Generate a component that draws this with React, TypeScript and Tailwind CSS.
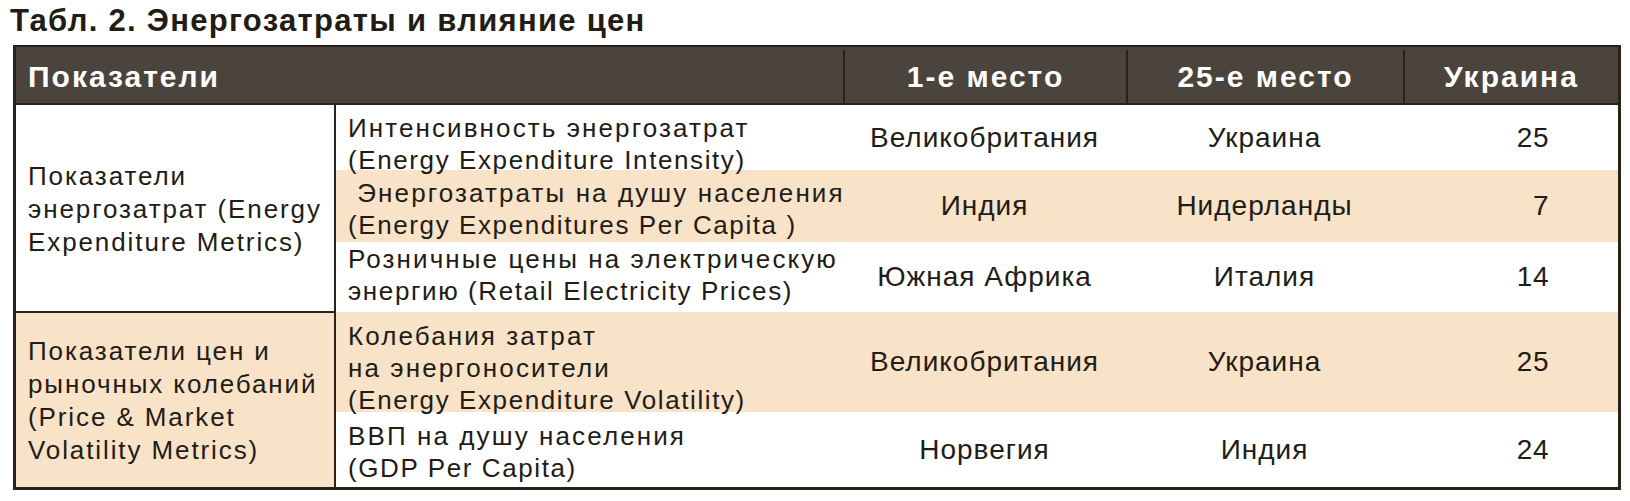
import React from "react";

type Row = {
  h: string;
  pad: string;
  tan: boolean;
  label: React.ReactNode;
  first: string;
  last: string;
  ua: string;
};

const Cy = ({ children }: { children: React.ReactNode }) => (
  <span className="tracking-[2.1px]">{children}</span>
);

const rows: Row[] = [
  {
    h: "h-[65px]",
    pad: "pt-[13px]",
    tan: false,
    label: (
      <>
        <Cy>Интенсивность энергозатрат</Cy>
        <br />
        (Energy Expenditure Intensity)
      </>
    ),
    first: "Великобритания",
    last: "Украина",
    ua: "25",
  },
  {
    h: "h-[72px]",
    pad: "pt-[5px]",
    tan: true,
    label: (
      <>
        <Cy>{"\u00a0"}Энергозатраты на душу населения</Cy>
        <br />
        (Energy Expenditures Per Capita )
      </>
    ),
    first: "Индия",
    last: "Нидерланды",
    ua: "7",
  },
  {
    h: "h-[70px]",
    pad: "pb-[5px]",
    tan: false,
    label: (
      <>
        <Cy>Розничные цены на электрическую</Cy>
        <br />
        энергию (Retail Electricity Prices)
      </>
    ),
    first: "Южная Африка",
    last: "Италия",
    ua: "14",
  },
  {
    h: "h-[100px]",
    pad: "pt-[12px]",
    tan: true,
    label: (
      <>
        <Cy>Колебания затрат</Cy>
        <br />
        <Cy>на энергоносители</Cy>
        <br />
        (Energy Expenditure Volatility)
      </>
    ),
    first: "Великобритания",
    last: "Украина",
    ua: "25",
  },
  {
    h: "h-[75px]",
    pad: "pt-[4px]",
    tan: false,
    label: (
      <>
        <Cy>ВВП на душу населения</Cy>
        <br />
        (GDP Per Capita)
      </>
    ),
    first: "Норвегия",
    last: "Индия",
    ua: "24",
  },
];

function DataRow({ r }: { r: Row }) {
  return (
    <div className={`flex ${r.h} ${r.tan ? "bg-[#f8e2c8]" : "bg-white"}`}>
      <div
        className={`w-[507px] flex items-center pl-[12px] ${r.pad} text-[26px] leading-[32px] tracking-[1.6px] whitespace-nowrap`}
      >
        <div className="relative z-10">{r.label}</div>
      </div>
      <div className="w-[283px] flex items-center justify-center text-[28px] tracking-[1px]">
        {r.first}
      </div>
      <div className="w-[277px] flex items-center justify-center text-[28px] tracking-[1px]">
        {r.last}
      </div>
      <div className="w-[215px] flex items-center justify-end pr-[69px] text-[28px] tracking-[0.5px]">
        {r.ua}
      </div>
    </div>
  );
}

export default function App() {
  return (
    <div
      className="w-[1630px] h-[501px] bg-white text-[#221c15]"
      style={{ fontFamily: '"Liberation Sans", Arial, sans-serif' }}
    >
      <div className="h-[45px] pl-[10px] pt-[3px] text-[31px] font-bold leading-[36px] tracking-[1.3px] whitespace-nowrap">
        Табл. 2. Энергозатраты и влияние цен
      </div>
      <div className="ml-[13px] w-[1608px] border-[3px] border-[#2a2218] border-t-[2px]">
        {/* header */}
        <div className="flex h-[58px] pt-[3px] bg-[#4a443d] text-white font-bold text-[30px] tracking-[2px] border-b-[2px] border-[#2a2218]">
          <div className="w-[827px] flex items-center pl-[12px]">Показатели</div>
          <div className="w-[283px] flex items-center justify-center border-l-[2px] border-[#2a2218]">
            1-е место
          </div>
          <div className="w-[277px] flex items-center justify-center border-l-[2px] border-[#2a2218]">
            25-е место
          </div>
          <div className="flex-1 flex items-center justify-center border-l-[2px] border-[#2a2218]">
            Украина
          </div>
        </div>
        {/* body */}
        <div className="flex">
          <div className="w-[320px] flex flex-col border-r-[2px] border-[#2a2218] text-[26px] leading-[33px] tracking-[1.9px] whitespace-nowrap">
            <div className="h-[208px] flex items-center pl-[12px] pt-[2px] border-b-[2px] border-[#2a2218] bg-white">
              <div>
                Показатели
                <br />
                энергозатрат (Energy
                <br />
                Expenditure Metrics)
              </div>
            </div>
            <div className="h-[174px] flex items-center pl-[12px] pt-[1px] bg-[#f8e2c8]">
              <div>
                Показатели цен и
                <br />
                рыночных колебаний
                <br />
                (Price &amp; Market
                <br />
                Volatility Metrics)
              </div>
            </div>
          </div>
          <div className="flex flex-col">
            {rows.map((r, i) => (
              <DataRow key={i} r={r} />
            ))}
          </div>
        </div>
      </div>
    </div>
  );
}
